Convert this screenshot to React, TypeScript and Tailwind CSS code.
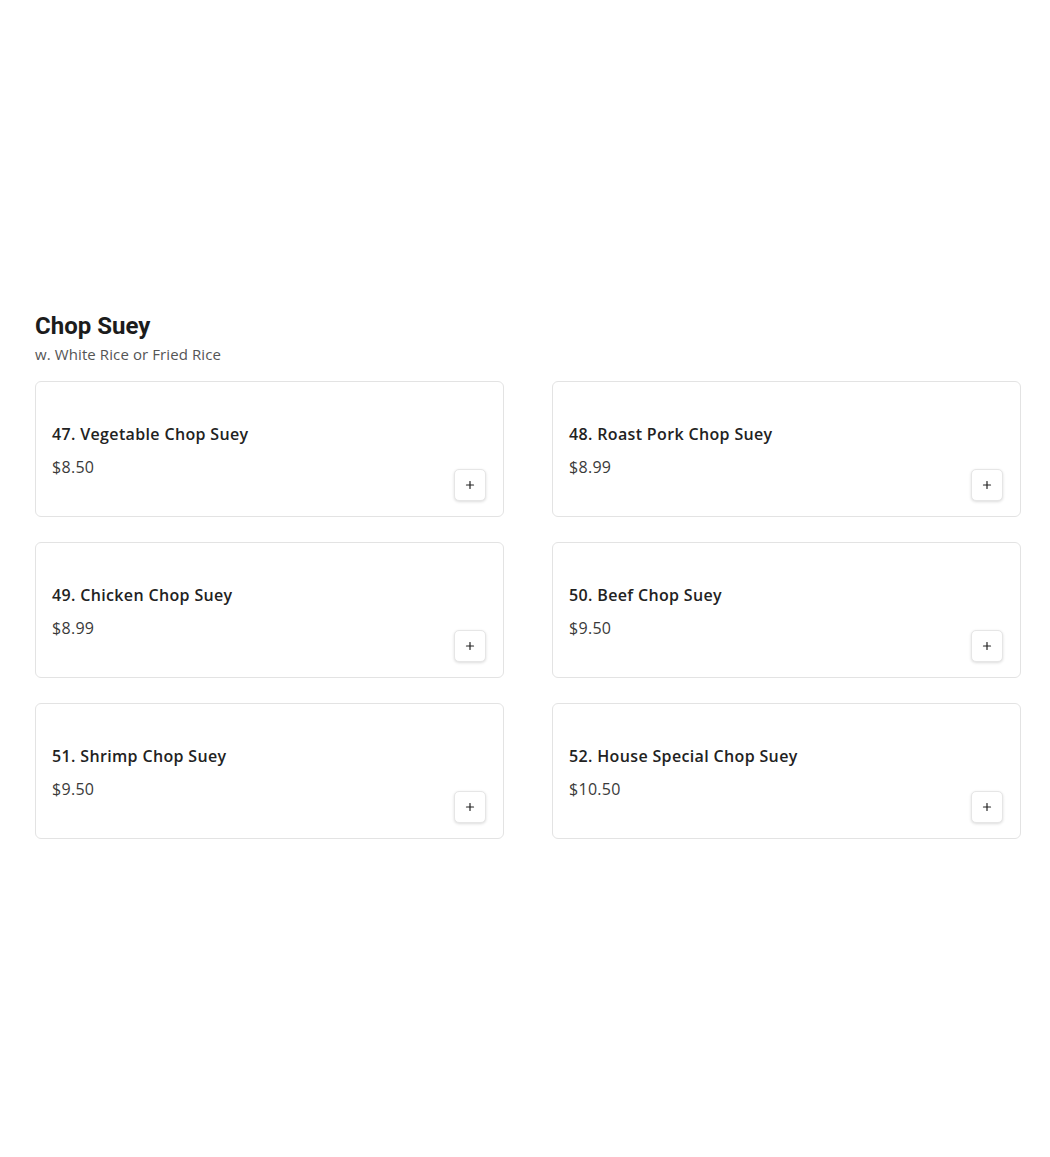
import { Plus } from "lucide-react";

const items = [
    { name: "47. Vegetable Chop Suey", price: "$8.50" },
    { name: "48. Roast Pork Chop Suey", price: "$8.99" },
    { name: "49. Chicken Chop Suey", price: "$8.99" },
    { name: "50. Beef Chop Suey", price: "$9.50" },
    { name: "51. Shrimp Chop Suey", price: "$9.50" },
    { name: "52. House Special Chop Suey", price: "$10.50" },
];

const body = { fontFamily: '"Open Sans", "Noto Sans", sans-serif' };

export default function App() {
    return (
        <div className="min-h-[1157px] bg-white pt-[311px] pl-[35px]">
            <div className="w-[986px]">
                <h2
                    className="text-[24px] leading-[30px] font-bold text-[#1c1c1c]"
                    style={{ fontFamily: 'Roboto, "Liberation Sans", sans-serif' }}
                >
                    Chop Suey
                </h2>
                <p className="mt-[3px] text-[15px] leading-[20px] tracking-[0.1px] text-[#555]" style={body}>
                    w. White Rice or Fried Rice
                </p>

                <div className="mt-[17px] grid grid-cols-2 gap-x-[48px] gap-y-[25px]">
                    {items.map((item) => (
                        <div
                            key={item.name}
                            className="h-[136px] rounded-[6px] border border-[#e3e3e3] bg-white pl-[16px] pr-[17px] pt-[40px] flex flex-col"
                            style={body}
                        >
                            <h3 className="text-[16px] leading-[24px] font-semibold text-[#222] tracking-[0.35px]">
                                {item.name}
                            </h3>
                            <div className="mt-[11px] flex items-start justify-between">
                                <span className="text-[16px] leading-[20px] tracking-[0.3px] text-[#3a3a3a]">{item.price}</span>
                                <button className="mt-[12px] flex h-[32px] w-[32px] items-center justify-center rounded-[5px] border border-[#e6e6e6] bg-white shadow-[0_1px_3px_rgba(0,0,0,0.14)]">
                                    <Plus className="h-[12px] w-[12px] text-[#222]" strokeWidth={2.4} />
                                </button>
                            </div>
                        </div>
                    ))}
                </div>
            </div>
        </div>
    );
}
